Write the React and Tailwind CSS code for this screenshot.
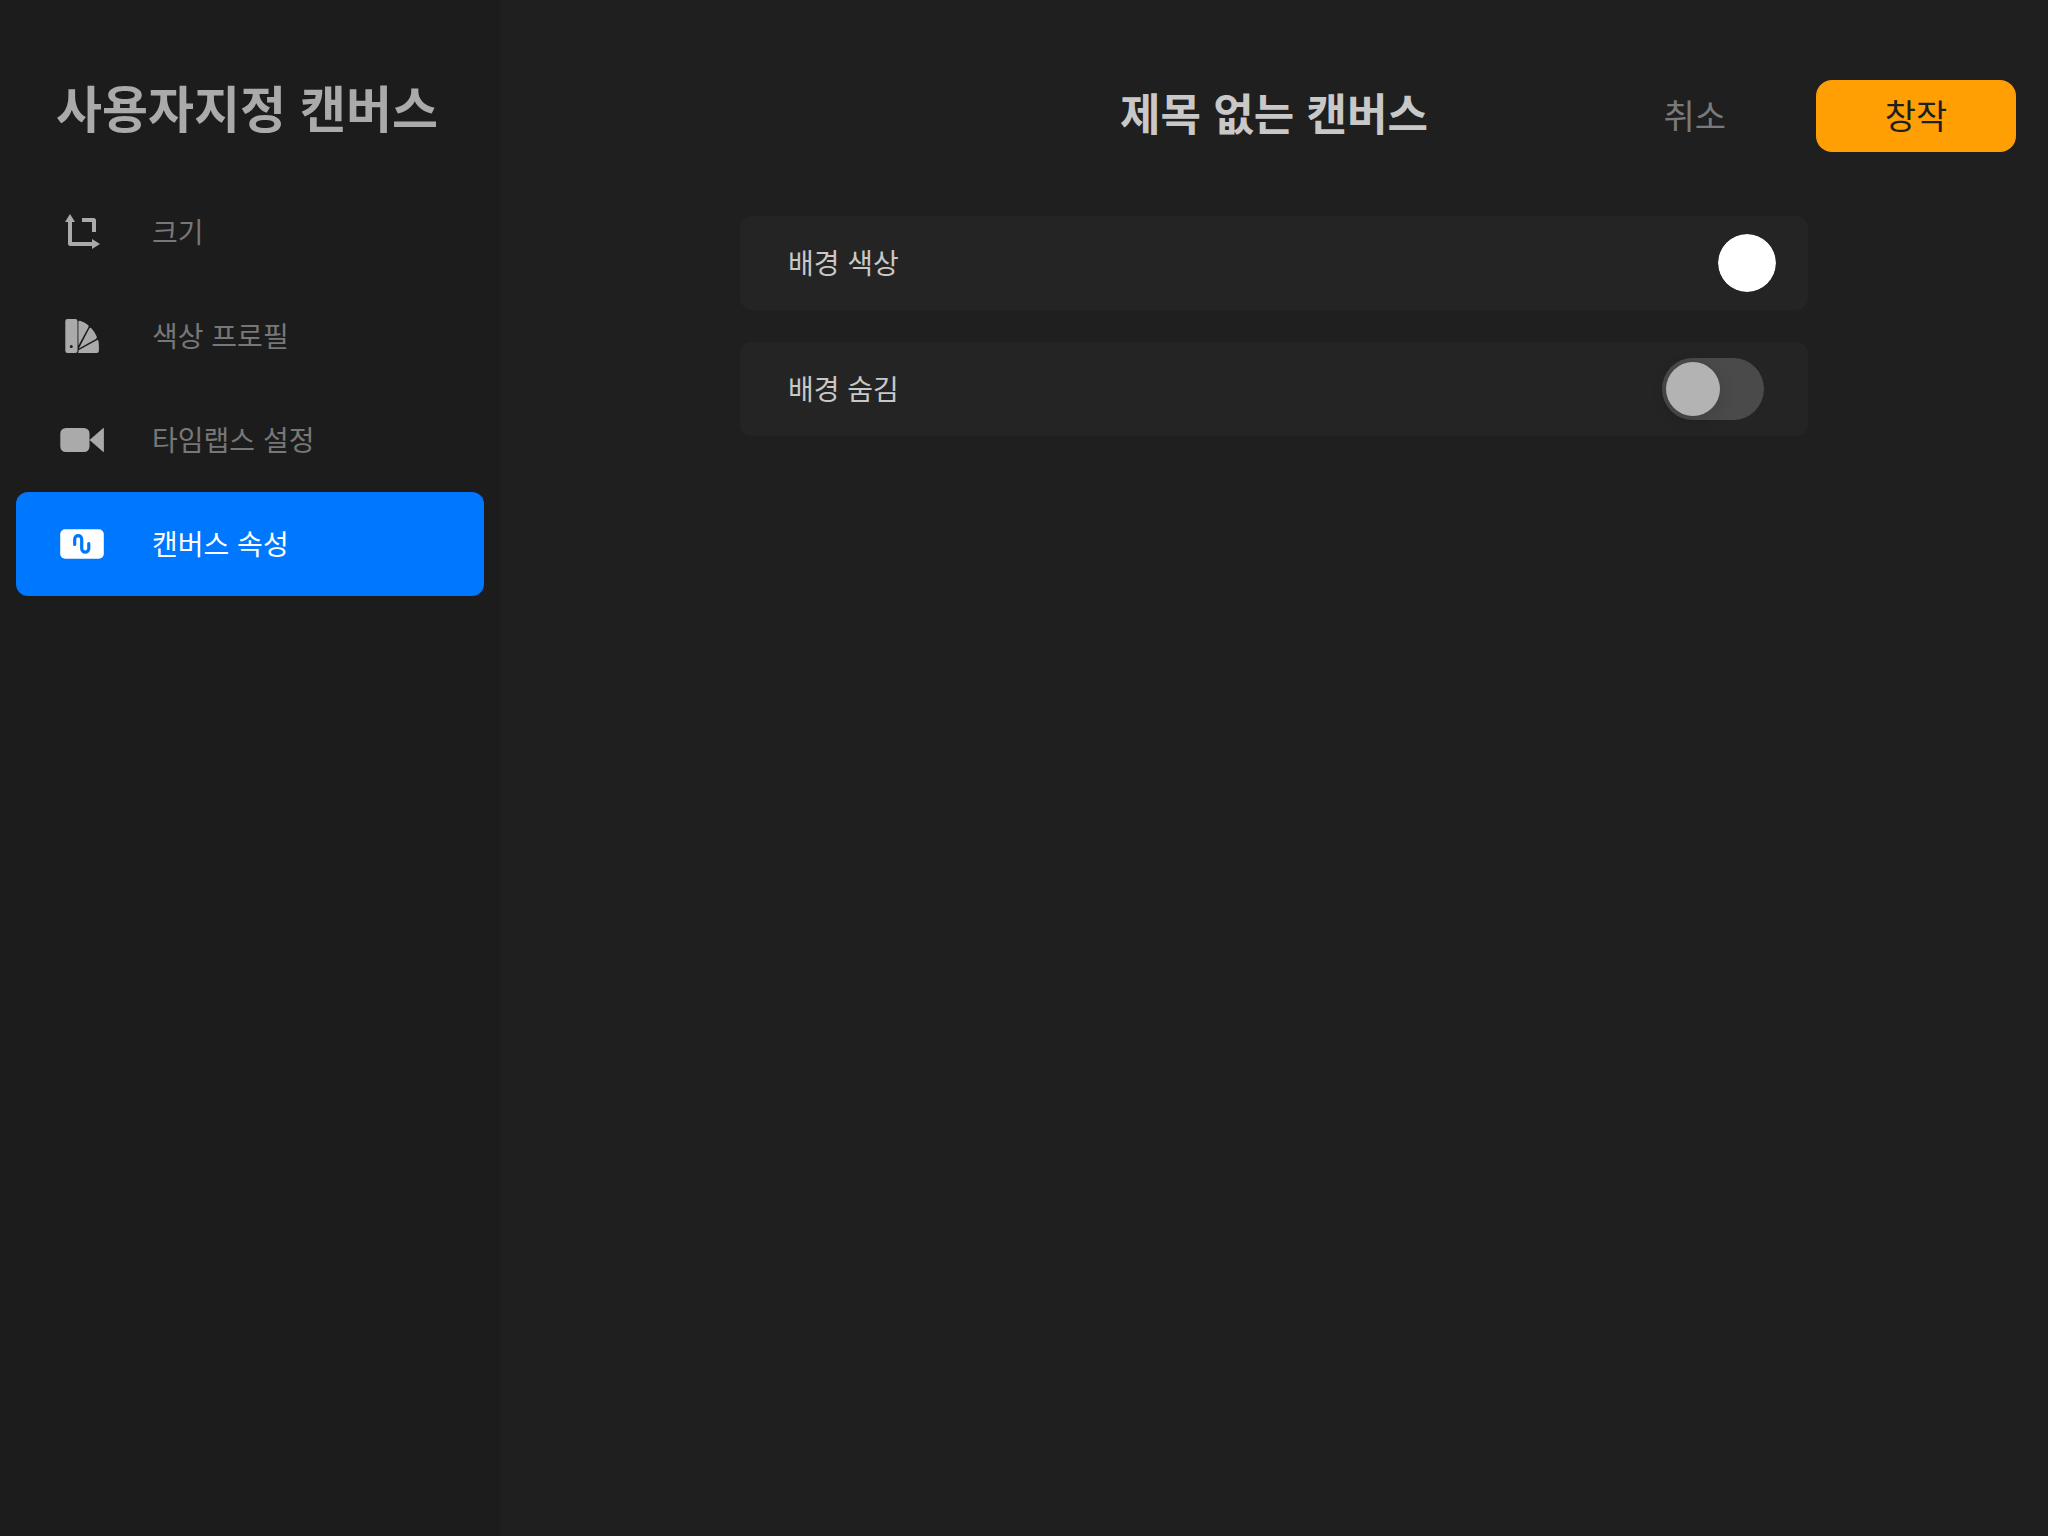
import { useState } from 'react';
import clsx from 'clsx';

const SizeIcon = () => (
  <svg viewBox="0 0 44 44" className="w-11 h-11 shrink-0" fill="currentColor" aria-hidden="true">
    <path d="M10 4l5 8h-3v20h20v-3l8 5-8 5v-3H10.5Q8 36 8 33.5V12H5z" />
    <path d="M22 8h11.500Q36 8 36 10.500V22h-4V12H22z" />
  </svg>
);

const SwatchIcon = () => (
  <svg viewBox="0 0 44 44" className="w-11 h-11 shrink-0" fill="currentColor" aria-hidden="true">
    <path fillRule="evenodd" d="M7.500 5h7.800a2.200 2.200 0 0 1 2.200 2.200v29.600a2.200 2.200 0 0 1-2.200 2.200H7.500a2.200 2.200 0 0 1-2.200-2.200V7.200A2.200 2.200 0 0 1 7.500 5zM11.300 31a1.500 1.500 0 1 0 0 3 1.500 1.500 0 0 0 0-3z" />
    <path d="M18.400 8.200q0-1.700 1.600-1.400 4.600 1.200 8 4.200 1.200 1 .4 2.300L18.400 31.500z" />
    <path d="M29.300 14.600q1-1.600 2.300-.2 3.400 3.600 5.100 8.200.5 1.700-.8 2.400L18.900 34.400z" />
    <path d="M36.700 26.300q1.400-.7 1.700.8.500 2.600.5 5.700v4a2.200 2.200 0 0 1-2.200 2.200H18q.6-.8.600-2.700z" />
  </svg>
);

const VideoIcon = () => (
  <svg viewBox="0 0 44 44" className="w-11 h-11 shrink-0" fill="currentColor" aria-hidden="true">
    <rect x="0.300" y="10" width="29.200" height="24" rx="5.500" />
    <path d="M29.500 22L43 10.300q.9-.6.900.4v22.600q0 1-.9.400z" />
  </svg>
);

const CanvasIcon = () => (
  <svg viewBox="0 0 44 44" className="w-11 h-11 shrink-0" aria-hidden="true">
    <rect x="0.200" y="7.300" width="43.600" height="29.400" rx="5" fill="currentColor" />
    <path d="M14.700 22.500v-5.300a3.500 3.500 0 0 1 7 0v9.400a3.550 3.550 0 0 0 7.100 0v-5.100" fill="none" stroke="#0077ff" strokeWidth="3.200" strokeLinecap="round" />
  </svg>
);

const menu = [
  { id: 'size', label: '크기', Icon: SizeIcon },
  { id: 'profile', label: '색상 프로필', Icon: SwatchIcon },
  { id: 'timelapse', label: '타임랩스 설정', Icon: VideoIcon },
  { id: 'canvas', label: '캔버스 속성', Icon: CanvasIcon },
];

function SettingRow({ id, label, className, children }) {
  return (
    <div className={clsx('flex items-center justify-between h-[94px] pl-12 rounded-xl bg-[#242424]', className)}>
      <label htmlFor={id} className="pb-0.5 text-[28px] leading-10 text-[#c8c8c8]">{label}</label>
      {children}
    </div>
  );
}

export default function App() {
  const [active, setActive] = useState('canvas');
  const [color, setColor] = useState('#ffffff');
  const [hidden, setHidden] = useState(false);

  return (
    <div className="flex min-h-screen bg-[#1f1f1f] font-['Noto_Sans_CJK_KR',sans-serif]" lang="ko">
      <aside className="w-[500px] shrink-0 px-4 pt-[70px] bg-[#1c1c1c]">
        <h1 className="pl-10 mb-[38px] text-[50px] leading-[72px] font-bold text-[#aaaaaa]">사용자지정 캔버스</h1>
        <nav className="flex flex-col">
          {menu.map(({ id, label, Icon }) => (
            <button
              key={id}
              type="button"
              onClick={() => setActive(id)}
              className={clsx(
                'flex items-center gap-12 h-[104px] pl-11 rounded-xl text-left text-[28px] leading-10',
                active === id ? 'bg-[#0077ff] text-white' : 'text-[#aaaaaa]'
              )}
            >
              <Icon />
              <span className={clsx('pb-0.5', active === id ? 'text-white' : 'text-[#777777]')}>{label}</span>
            </button>
          ))}
        </nav>
      </aside>

      <main className="flex-1 pt-20">
        <header className="grid grid-cols-[1fr_auto_1fr] items-center px-8">
          <h2 className="col-start-2 pb-2 text-[44px] leading-[64px] font-bold text-[#c8c8c8]">제목 없는 캔버스</h2>
          <div className="flex items-center justify-end gap-[58px]">
            <button type="button" className="h-[72px] px-8 pb-0.5 text-[34px] leading-10 text-[#7a7a7a]">취소</button>
            <button type="button" className="w-[200px] h-[72px] pb-0.5 rounded-2xl bg-[#ff9f04] text-[34px] leading-10 text-[#1f1f1f]">창작</button>
          </div>
        </header>

        <section className="flex flex-col gap-8 max-w-[1068px] mx-auto mt-16">
          <SettingRow id="bg-color" label="배경 색상" className="pr-8">
            <input
              id="bg-color"
              type="color"
              value={color}
              onChange={(e) => setColor(e.target.value)}
              className="w-[58px] h-[58px] rounded-full appearance-none cursor-pointer [&::-webkit-color-swatch-wrapper]:p-0 [&::-webkit-color-swatch]:rounded-full [&::-webkit-color-swatch]:border-0"
            />
          </SettingRow>
          <SettingRow id="bg-hidden" label="배경 숨김" className="pr-11">
            <input
              id="bg-hidden"
              type="checkbox"
              role="switch"
              checked={hidden}
              onChange={(e) => setHidden(e.target.checked)}
              className="flex items-center w-[102px] h-[62px] p-1 rounded-full appearance-none cursor-pointer bg-[#4a4a4a] checked:bg-[#0077ff] checked:justify-end before:block before:w-[54px] before:h-[54px] before:rounded-full before:bg-[#b3b3b3] before:shadow-[0_4px_16px_rgba(0,0,0,0.15)]"
            />
          </SettingRow>
        </section>
      </main>
    </div>
  );
}
